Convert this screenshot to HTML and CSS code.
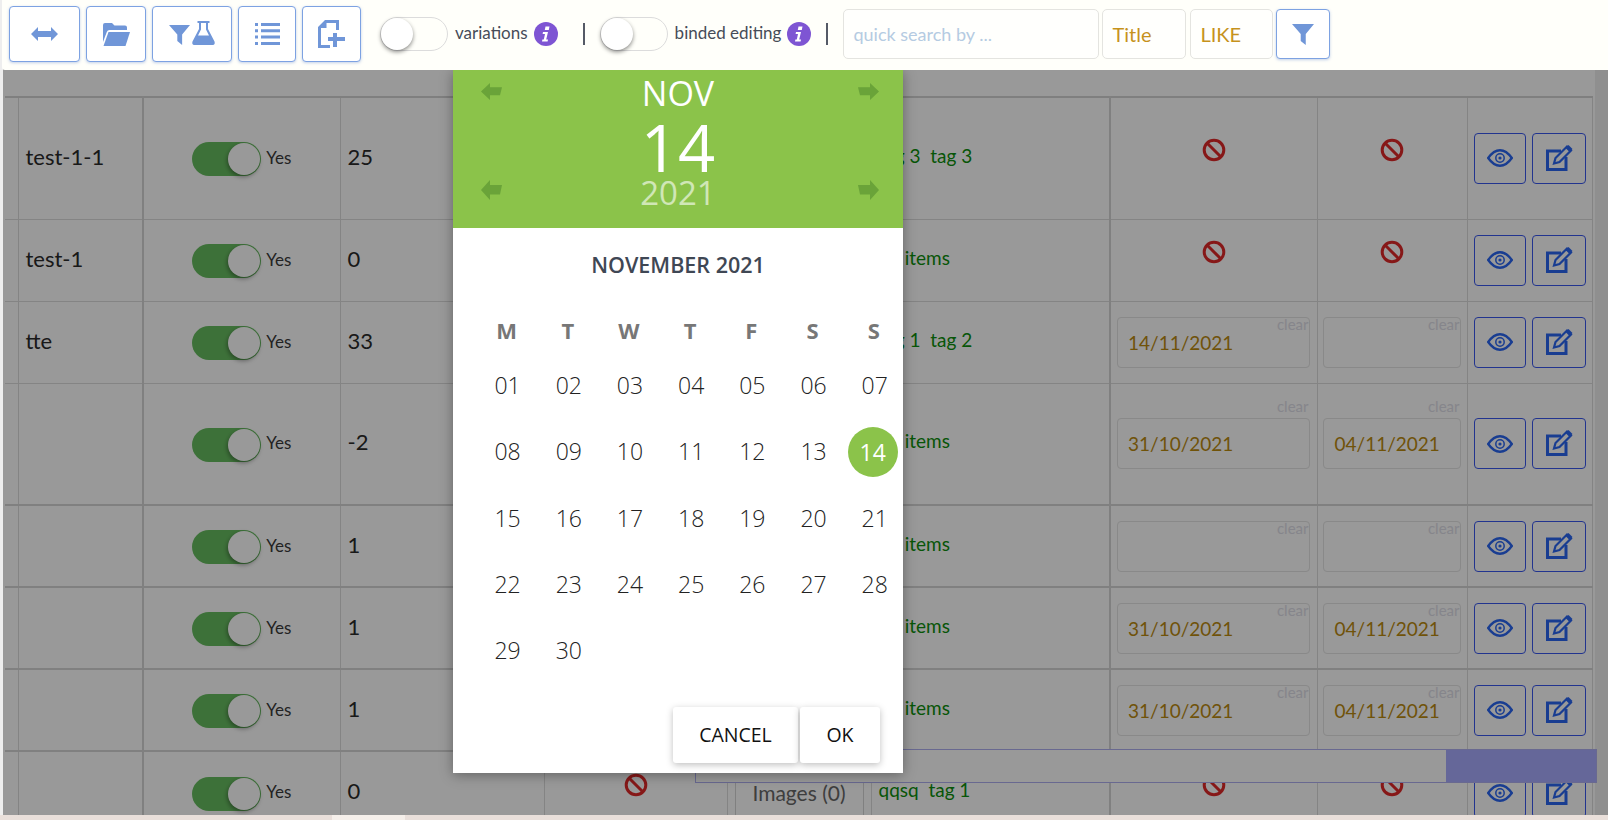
FILE: index.html
```html
<!DOCTYPE html>
<html lang="en">
<head>
<meta charset="utf-8">
<title>Products</title>
<link rel="stylesheet" href="styles.css">
</head>
<body>
<svg class="sprites" width="0" height="0" aria-hidden="true">
  <symbol id="i-eye" viewBox="0 0 26 18"><path d="M1.2 9C5 3.6 9 1.2 13 1.2S21 3.6 24.8 9C21 14.4 17 16.8 13 16.8S5 14.4 1.2 9Z" fill="none" stroke="currentColor" stroke-width="2.4"/><circle cx="13" cy="9" r="4.2" fill="none" stroke="currentColor" stroke-width="1.5"/><circle cx="13" cy="9" r="1.6" fill="currentColor"/></symbol>
  <symbol id="i-edit" viewBox="0 0 27 27"><path d="M15 7H1.5V25.5H20V13" fill="none" stroke="currentColor" stroke-width="3"/><path d="M8 19.5 9.5 14 21 2.5 25 6.500 13.500 18Z" fill="none" stroke="currentColor" stroke-width="2.200"/><path d="M19.500 4 23.500 8 26.500 5 22.500 1Z" fill="currentColor"/></symbol>
  <symbol id="i-no" viewBox="0 0 24 24"><circle cx="12" cy="12" r="9.800" fill="none" stroke="currentColor" stroke-width="3"/><path d="M5.500 5.500 18.500 18.500" stroke="currentColor" stroke-width="3"/></symbol>
  <symbol id="i-funnel" viewBox="0 0 24 24"><path d="M0 1H24L15 12V24L9.500 19.500V12Z" fill="currentColor"/></symbol>
  <symbol id="i-info" viewBox="0 0 24 24"><circle cx="12" cy="12" r="12" fill="currentColor"/><path d="M11.500 4.500h4l-.7 3.500h-4ZM9 10h5l-1.800 7.500h1.800l-.4 2H8l.4-2h1.400L11 12H8.600Z" fill="#fff"/></symbol>
  <symbol id="i-arrow" viewBox="0 0 21 18" preserveAspectRatio="none"><path d="M0 9 9 0V4.500H21L19 13H9V18Z" fill="currentColor"/></symbol>
</svg>

<header class="toolbar">
  <button class="tool tool-a" type="button"><svg class="ic-h" viewBox="0 0 27 14"><path d="M0 7 7 0V4H20V0L27 7 20 14V10H7V14Z"/></svg></button>
  <button class="tool tool-b" type="button"><svg class="ic-folder" viewBox="0 0 28 24"><path d="M1 20V3Q1 1 3 1H10L12.500 3.500H23Q25 3.500 25 5.500V8H7.500Q5.500 8 4.800 10Z"/><path d="M6.500 10H28L23.500 24H1.500Z"/></svg></button>
  <button class="tool tool-c" type="button"><svg class="ic-funnel"><use href="#i-funnel"/></svg><svg class="ic-flask" viewBox="0 0 23 24"><path fill-rule="evenodd" d="M5.500 0H17.500V2H16V8L22.500 20.500Q23.500 24 20 24H3Q-.5 24 .5 20.500L7 8V2H5.500ZM9 2V8.500L6 14.500H17L14 8.500V2Z"/></svg></button>
  <button class="tool tool-d" type="button"><svg class="ic-list" viewBox="0 0 25 22"><path d="M0 0H3V3H0ZM6 0H25V3H6ZM0 6.300H3V9.300H0ZM6 6.300H25V9.300H6ZM0 12.600H3V15.600H0ZM6 12.600H25V15.600H6ZM0 19H3V22H0ZM6 19H25V22H6Z"/></svg></button>
  <button class="tool tool-e" type="button"><svg class="ic-file" viewBox="0 0 27 28"><path d="M7 0H21V10H18V3H8.500V8H3V25H12V28H0V7Z"/><path d="M15 17V13H19V17H27V21H19V27H15V21H10V17Z"/></svg></button>

  <span class="switch switch-a"><span class="knob"></span></span>
  <span class="tlabel">variations</span>
  <svg class="info"><use href="#i-info"/></svg>
  <span class="bar bar-a"></span>
  <span class="switch switch-b"><span class="knob"></span></span>
  <span class="tlabel tlabel-b">binded editing</span>
  <svg class="info"><use href="#i-info"/></svg>
  <span class="bar bar-b"></span>

  <input class="field search" type="text" placeholder="quick search by ...">
  <span class="field pick pick-a">Title</span>
  <span class="field pick pick-b">LIKE</span>
  <button class="tool go" type="button"><svg class="ic-go"><use href="#i-funnel"/></svg></button>
</header>

<main class="stage">
  <div class="rail"></div>
  <table class="grid">
    <colgroup>
      <col class="w1"><col class="w2"><col class="w3"><col class="w4"><col class="w5"><col class="w6"><col class="w7"><col class="w8"><col class="w9"><col class="w10">
    </colgroup>
    <tbody>
      <tr class="tall first">
        <td></td><td class="txt">test-1-1</td>
        <td><div class="yes"><span class="on"><span class="knob"></span></span><span class="yes-t">Yes</span></div></td>
        <td class="txt">25</td><td></td><td></td>
        <td class="tags">tag 3 &nbsp;tag 3</td>
        <td class="mid"><svg class="no"><use href="#i-no"/></svg></td>
        <td class="mid"><svg class="no"><use href="#i-no"/></svg></td>
        <td><div class="acts"><button class="act act-v" type="button"><svg class="eye"><use href="#i-eye"/></svg></button><button class="act act-e" type="button"><svg class="edit"><use href="#i-edit"/></svg></button></div></td>
      </tr>
      <tr>
        <td></td><td class="txt">test-1</td>
        <td><div class="yes"><span class="on"><span class="knob"></span></span><span class="yes-t">Yes</span></div></td>
        <td class="txt">0</td><td></td><td></td>
        <td class="tags">no items</td>
        <td class="mid"><svg class="no"><use href="#i-no"/></svg></td>
        <td class="mid"><svg class="no"><use href="#i-no"/></svg></td>
        <td><div class="acts"><button class="act act-v" type="button"><svg class="eye"><use href="#i-eye"/></svg></button><button class="act act-e" type="button"><svg class="edit"><use href="#i-edit"/></svg></button></div></td>
      </tr>
      <tr>
        <td></td><td class="txt">tte</td>
        <td><div class="yes"><span class="on"><span class="knob"></span></span><span class="yes-t">Yes</span></div></td>
        <td class="txt">33</td><td></td><td></td>
        <td class="tags">tag 1 &nbsp;tag 2</td>
        <td><div class="date">14/11/2021<span class="clear">clear</span></div></td>
        <td><div class="date d2"><span class="clear">clear</span></div></td>
        <td><div class="acts"><button class="act act-v" type="button"><svg class="eye"><use href="#i-eye"/></svg></button><button class="act act-e" type="button"><svg class="edit"><use href="#i-edit"/></svg></button></div></td>
      </tr>
      <tr class="tall">
        <td></td><td class="txt"></td>
        <td><div class="yes"><span class="on"><span class="knob"></span></span><span class="yes-t">Yes</span></div></td>
        <td class="txt">-2</td><td></td><td></td>
        <td class="tags">no items</td>
        <td><div class="date">31/10/2021<span class="clear clear-up">clear</span></div></td>
        <td><div class="date d2">04/11/2021<span class="clear clear-up">clear</span></div></td>
        <td><div class="acts"><button class="act act-v" type="button"><svg class="eye"><use href="#i-eye"/></svg></button><button class="act act-e" type="button"><svg class="edit"><use href="#i-edit"/></svg></button></div></td>
      </tr>
      <tr class="heavy">
        <td></td><td class="txt"></td>
        <td><div class="yes"><span class="on"><span class="knob"></span></span><span class="yes-t">Yes</span></div></td>
        <td class="txt">1</td><td></td><td></td>
        <td class="tags">no items</td>
        <td><div class="date"><span class="clear">clear</span></div></td>
        <td><div class="date d2"><span class="clear">clear</span></div></td>
        <td><div class="acts"><button class="act act-v" type="button"><svg class="eye"><use href="#i-eye"/></svg></button><button class="act act-e" type="button"><svg class="edit"><use href="#i-edit"/></svg></button></div></td>
      </tr>
      <tr class="heavy">
        <td></td><td class="txt"></td>
        <td><div class="yes"><span class="on"><span class="knob"></span></span><span class="yes-t">Yes</span></div></td>
        <td class="txt">1</td><td></td><td></td>
        <td class="tags">no items</td>
        <td><div class="date">31/10/2021<span class="clear">clear</span></div></td>
        <td><div class="date d2">04/11/2021<span class="clear">clear</span></div></td>
        <td><div class="acts"><button class="act act-v" type="button"><svg class="eye"><use href="#i-eye"/></svg></button><button class="act act-e" type="button"><svg class="edit"><use href="#i-edit"/></svg></button></div></td>
      </tr>
      <tr class="heavy">
        <td></td><td class="txt"></td>
        <td><div class="yes"><span class="on"><span class="knob"></span></span><span class="yes-t">Yes</span></div></td>
        <td class="txt">1</td><td></td><td></td>
        <td class="tags">no items</td>
        <td><div class="date">31/10/2021<span class="clear">clear</span></div></td>
        <td><div class="date d2">04/11/2021<span class="clear">clear</span></div></td>
        <td><div class="acts"><button class="act act-v" type="button"><svg class="eye"><use href="#i-eye"/></svg></button><button class="act act-e" type="button"><svg class="edit"><use href="#i-edit"/></svg></button></div></td>
      </tr>
      <tr class="heavy">
        <td></td><td class="txt"></td>
        <td><div class="yes"><span class="on"><span class="knob"></span></span><span class="yes-t">Yes</span></div></td>
        <td class="txt">0</td>
        <td class="mid"><svg class="no"><use href="#i-no"/></svg></td>
        <td><div class="images">Images (0)</div></td>
        <td class="tags">qqsq &nbsp;tag 1</td>
        <td class="mid"><svg class="no"><use href="#i-no"/></svg></td>
        <td class="mid"><svg class="no"><use href="#i-no"/></svg></td>
        <td><div class="acts"><button class="act act-v" type="button"><svg class="eye"><use href="#i-eye"/></svg></button><button class="act act-e" type="button"><svg class="edit"><use href="#i-edit"/></svg></button></div></td>
      </tr>
    </tbody>
  </table>

  <div class="hscroll"><div class="hthumb"></div></div>
  <div class="backdrop"></div>

  <section class="picker">
    <div class="p-head">
      <div class="p-side"><svg class="p-arrow"><use href="#i-arrow"/></svg><svg class="p-arrow p-low"><use href="#i-arrow"/></svg></div>
      <div class="p-date">
        <div class="p-mon">NOV</div>
        <div class="p-day">14</div>
        <div class="p-year">2021</div>
      </div>
      <div class="p-side p-right"><svg class="p-arrow"><use href="#i-arrow"/></svg><svg class="p-arrow p-low"><use href="#i-arrow"/></svg></div>
    </div>
    <div class="p-body">
      <div class="p-title">NOVEMBER 2021</div>
      <div class="p-cal">
        <span class="wd">M</span><span class="wd">T</span><span class="wd">W</span><span class="wd">T</span><span class="wd">F</span><span class="wd">S</span><span class="wd">S</span>
        <span class="dn">01</span><span class="dn">02</span><span class="dn">03</span><span class="dn">04</span><span class="dn">05</span><span class="dn">06</span><span class="dn">07</span>
        <span class="dn">08</span><span class="dn">09</span><span class="dn">10</span><span class="dn">11</span><span class="dn">12</span><span class="dn">13</span><span class="dn"><span class="sel">14</span></span>
        <span class="dn">15</span><span class="dn">16</span><span class="dn">17</span><span class="dn">18</span><span class="dn">19</span><span class="dn">20</span><span class="dn">21</span>
        <span class="dn">22</span><span class="dn">23</span><span class="dn">24</span><span class="dn">25</span><span class="dn">26</span><span class="dn">27</span><span class="dn">28</span>
        <span class="dn">29</span><span class="dn">30</span>
      </div>
      <div class="p-actions">
        <button class="p-btn p-cancel" type="button">CANCEL</button>
        <button class="p-btn p-ok" type="button">OK</button>
      </div>
    </div>
  </section>
</main>

<footer class="strip"><span class="strip-gap"></span><span class="strip-light"></span></footer>
</body>
</html>
```
FILE: styles.css
```css
* { box-sizing: border-box; }
html, body { margin: 0; height: 820px; overflow: hidden; }
body { background: #e9dfda; font-family: "Lato", "Open Sans", sans-serif; color: #333; }
.sprites { position: absolute; }

/* toolbar */
.toolbar {
  position: absolute; top: 0; left: 2px; right: 0; height: 70px; z-index: 3;
  background: #fffffa; display: flex; align-items: flex-start;
  padding-left: 7px; border-radius: 0 0 0 3px;
}
button { font: inherit; cursor: pointer; }
.tool {
  height: 56px; margin: 6px 6px 0 0; padding: 0; background: #fff;
  border: 1px solid #7da2e2; border-radius: 4px; color: #7096d8;
  box-shadow: 0 1px 3px rgba(80,120,200,.35);
  display: flex; align-items: center; justify-content: center;
}
.tool svg { fill: currentColor; display: block; }
.tool-a { width: 71px; }
.tool-b { width: 60px; }
.tool-c { width: 80px; gap: 2px; }
.tool-d { width: 58px; }
.tool-e { width: 59px; margin-right: 0; }
.ic-h { width: 27px; height: 14px; }
.ic-folder { width: 28px; height: 24px; }
.ic-funnel { width: 21px; height: 21px; }
.ic-flask { width: 23px; height: 24px; margin-top: -2px; }
.ic-list { width: 25px; height: 22px; }
.ic-file { width: 27px; height: 28px; }

.switch {
  width: 68px; height: 34px; margin-top: 17px; border: 1px solid #dcdcdc; border-radius: 17px;
  background: #fffffa; display: block; flex: none;
}
.switch-a { margin-left: 19px; }
.switch-b { margin-left: 15px; }
.knob {
  display: block; width: 32px; height: 32px; border-radius: 50%; background: #fff;
  box-shadow: 0 2px 4px rgba(0,0,0,.45);
}
.tlabel { margin: 21px 0 0 7px; font-size: 17px; line-height: 24px; color: #464c58; white-space: nowrap; }
.info { width: 24px; height: 24px; margin: 22px 0 0 6px; color: #7e55d3; flex: none; }
.bar { width: 2px; height: 22px; margin-top: 23px; background: #555a66; flex: none; }
.bar-a { margin-left: 25px; }
.bar-b { margin-left: 15px; }

.field {
  height: 50px; margin-top: 9px; background: #fffffd; border: 1px solid #e4e4e0; border-radius: 5px;
  font-family: inherit; font-size: 20px; padding: 0 9px; line-height: 48px; display: block; flex: none;
}
.search { width: 256px; margin-left: 15px; margin-right: 3px; outline: none; font-size: 18px; }
.search::placeholder { color: #b5cbe2; opacity: 1; }
.pick { color: #c6921c; width: 83px; }
.pick-a { width: 84px; margin-right: 4px; }
.pick-b { margin-right: 3px; }
.go { width: 54px; height: 50px; margin: 9px 0 0; }
.ic-go { width: 22px; height: 24px; }

/* table */
.stage {
  position: relative; height: 815px; overflow: hidden; background: #fff;
  padding: 96px 0 0 2px; border-left: 3px solid #eee;
}
.rail { position: absolute; top: 0; right: 0; bottom: 0; width: 13px; background: #eee; }
.grid {
  table-layout: fixed; width: 1587px; border-collapse: collapse;
  border-top: 2px solid #d4d4d4; border-right: 1px solid #dcdcdc;
}
.w1 { width: 13px; } .w2 { width: 125px; } .w3 { width: 197px; } .w4 { width: 204px; } .w5 { width: 183px; }
.w6 { width: 144px; } .w7 { width: 239px; } .w8 { width: 207px; } .w9 { width: 150px; } .w10 { width: 125px; }
.grid tr { height: 82px; }
.grid tr.tall { height: 122px; }
.grid td { padding: 0; border-left: 1px solid #dcdcdc; border-top: 1px solid #dcdcdc; vertical-align: middle; }
.grid tr.first td { border-top: 0; }
.grid tr.heavy td { border-top: 2px solid #d6d6d6; }
.grid td:nth-child(1) { border-left: 0; }
.grid td:nth-child(3), .grid td:nth-child(8) { border-left: 2px solid #d6d6d6; }
.grid td.txt { padding: 0 0 4px 7px; font-size: 22px; color: #2a2a2a; }
.grid td.tags { padding: 0 0 6px 7px; font-size: 19px; color: #0c8f0c; }
.mid { text-align: center; }
.no { width: 24px; height: 24px; color: #e02828; display: block; margin: -16px auto 0; }

.yes { display: flex; align-items: center; justify-content: center; gap: 5px; font-size: 17px; color: #3a3a3a; }
.yes-t { margin-bottom: 2px; }
.on {
  width: 69px; height: 34px; margin-top: 2px; border-radius: 17px; background: #67bd60;
  display: flex; justify-content: flex-end; align-items: center; padding-right: 1px;
}
.on .knob { width: 32px; height: 32px; box-shadow: -1px 2px 4px rgba(0,0,0,.35); }

.date {
  position: relative; height: 51px; margin: 0 7px 0 6px; padding-left: 10px; line-height: 49px;
  border: 1px solid #e4e4e4; border-radius: 4px; font-size: 19px; color: #bb8a10;
}
.d2 { margin: 0 6px 0 5px; padding-left: 11px; }
.clear { position: absolute; top: -4px; right: 0; font-size: 15px; line-height: 20px; color: #dedee8; }
.clear-up { top: -23px; }

.acts { display: flex; gap: 6px; padding-left: 6px; }
.act {
  width: 52px; height: 51px; padding: 0; background: #fff; border: 1px solid #3a58ee; border-radius: 4px;
  color: #2a66f2; display: flex; align-items: center; justify-content: center;
}
.act-e { width: 54px; }
.eye { width: 26px; height: 18px; }
.edit { width: 27px; height: 27px; margin: -2px 0 0 2px; }
.images {
  width: 129px; height: 64px; margin-left: 7px; text-align: center; line-height: 64px;
  font-size: 21px; color: #686868; border-left: 1px solid #d6d6d6; border-right: 1px solid #d6d6d6;
}

.hscroll {
  position: absolute; left: 692px; top: 749px; width: 902px; height: 34px;
  background: #fff; border: 1px solid #b0b0f0; display: flex; justify-content: flex-end;
}
.hthumb { width: 150px; background: #a9acff; }

.backdrop { position: absolute; inset: 0; background: rgba(0,0,0,.4); }

/* date picker */
.picker {
  position: absolute; left: 450px; top: 70px; width: 450px; height: 703px; background: #fff;
  font-family: "Open Sans", sans-serif; box-shadow: 0 2px 12px rgba(0,0,0,.35);
}
.p-head {
  height: 158px; background: #8bc34a; color: #fff; display: flex; justify-content: space-between;
  padding: 13px 24px 28px 28px;
}
.p-side { width: 21px; display: flex; flex-direction: column; justify-content: space-between; }
.p-right { transform: scaleX(-1); }
.p-arrow { width: 21px; height: 17px; color: #6aa339; display: block; }
.p-low { height: 20px; }
.p-date { text-align: center; margin-right: 4px; }
.p-mon { font-size: 34px; line-height: 46px; margin-top: -13px; }
.p-day { font-size: 65px; line-height: 62px; }
.p-year { font-size: 33px; line-height: 30px; opacity: .6; }
.p-body { padding-top: 22px; }
.p-title { text-align: center; font-size: 21.500px; font-weight: 600; line-height: 30px; color: #3f4754; margin-bottom: 27px; }
.p-cal { display: grid; grid-template-columns: repeat(7, 61.2px); grid-template-rows: 46px repeat(5, 66.300px); padding-left: 23px; }
.wd, .dn { display: flex; align-items: center; justify-content: center; }
.wd { font-size: 22px; font-weight: 700; color: #777; }
.dn { font-size: 23px; font-weight: 300; color: #222; padding: 0 0 2px 2px; }
.sel { width: 50px; height: 50px; margin: 2px 0 0 -4px; border-radius: 50%; background: #8bc34a; color: #fff; display: flex; align-items: center; justify-content: center; font-weight: 400; }
.p-actions { display: flex; justify-content: flex-end; gap: 2px; padding-right: 23px; margin-top: 22.500px; }
.p-btn {
  height: 56px; padding: 0; background: #fff; border: 0; border-radius: 3px; color: #111;
  font-family: "Open Sans", sans-serif; font-size: 19.500px; font-weight: 500; box-shadow: 0 2px 7px rgba(0,0,0,.25);
}
.p-cancel { width: 125px; }
.p-ok { width: 80px; }

.strip { height: 5px; display: flex; }
.strip-gap { width: 332px; }
.strip-light { width: 73px; background: #f5efea; }
```
